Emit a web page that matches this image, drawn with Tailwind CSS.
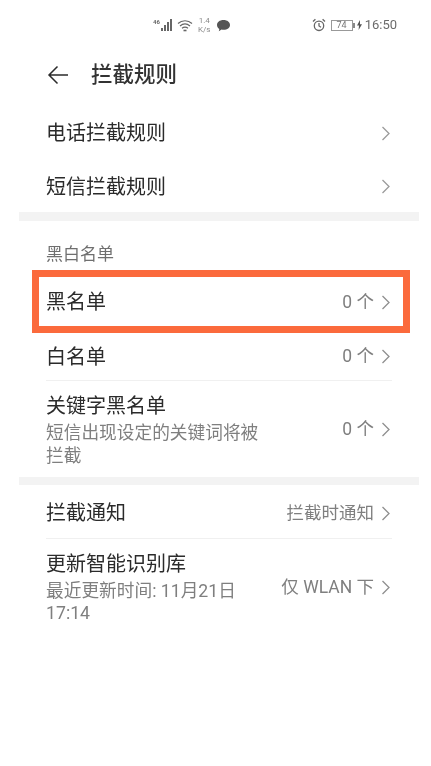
<!DOCTYPE html>
<html lang="zh">
<head>
<meta charset="utf-8">
<script src="https://cdn.jsdelivr.net/npm/@tailwindcss/browser@4"></script>
</head>
<body class="bg-white">
<div class="w-[431px] h-[766px] overflow-hidden bg-white text-[#2b2b2b] font-['Roboto','Noto_Sans_CJK_SC',sans-serif] blur-[0.4px]">
  <!-- status bar -->
  <div class="h-[50px] pl-[153px] pr-[34px] flex items-center justify-between text-[#6b6b6b]">
    <div class="flex items-center gap-[3px]">
      <svg width="21" height="14" viewBox="0 0 21 14" fill="#666"><text x="0" y="6" font-size="6" font-weight="700" font-family="Roboto">46</text><rect x="8" y="10" width="2" height="3"/><rect x="11" y="7" width="2" height="6"/><rect x="14" y="4" width="2" height="9"/><rect x="17" y="1" width="2" height="12"/></svg>
      <svg width="16" height="13" viewBox="0 0 16 13" fill="none" stroke="#666" stroke-width="1.2"><path d="M1 4.5C5 .8 11 .8 15 4.5M3 7C6 4.4 10 4.4 13 7M5 9.3C6.8 8 9.2 8 11 9.3"/><path d="M6.5 11.5h3" stroke-width="1.6"/></svg>
      <div class="flex flex-col items-center text-[8px] leading-[9px] ml-[2px] text-[#8a8a8a]"><span>1.4</span><span>K/s</span></div>
      <svg class="ml-[3px]" width="15" height="13" viewBox="0 0 15 13" fill="#555"><path d="M7.5 1C3.6 1 1 3.2 1 6c0 1.6.9 3 2.3 3.9L2.8 12.2 5.6 10.6c.6.1 1.2.2 1.9.2 3.9 0 6.5-2.1 6.5-4.8S11.4 1 7.5 1z"/></svg>
    </div>
    <div class="flex items-center">
      <svg width="14" height="14" viewBox="0 0 14 14" fill="none" stroke="#666" stroke-width="1.3"><circle cx="7" cy="7.8" r="4.7"/><path d="M7 5v3l2 1.2M1 3.4 3.4 1.2M13 3.4 10.6 1.2"/></svg>
      <div class="ml-[5px] w-[22px] h-[11px] border border-[#999] text-[9px] leading-[9px] text-center text-[#777]">74</div>
      <div class="w-[2px] h-[5px] bg-[#888]"></div>
      <svg class="ml-[2px]" width="5" height="10" viewBox="0 0 5 10" fill="#555"><path d="M3 0 0 5.6h2L1.6 10 5 4.2H3z"/></svg>
      <span class="ml-[3px] text-[13px] leading-[16px]">16:50</span>
    </div>
  </div>
  <!-- header -->
  <div class="h-[50px] pl-[47px] flex items-center">
    <svg width="22" height="20" viewBox="0 0 22 20" fill="none" stroke="#2b2b2b" stroke-width="1.5"><path d="M21 10H2M10.5 1.5 2 10l8.5 8.5"/></svg>
    <span class="ml-[22px] text-[21.5px] leading-[30px] font-medium text-[#333]">拦截规则</span>
  </div>
  <div class="ml-[19px] w-[400px]">
    <div class="px-[27px]">
      <div class="h-[54px] mt-[6px] flex items-center justify-between">
        <span class="text-[20px] leading-[28px]">电话拦截规则</span>
        <svg class="mr-[1px]" width="10" height="15" viewBox="0 0 10 15" fill="none" stroke="#9b9b9b" stroke-width="1.3"><path d="M1.5 1 8 7.5 1.5 14"/></svg>
      </div>
      <div class="h-[52px] pt-[1px] flex items-center justify-between">
        <span class="text-[20px] leading-[28px]">短信拦截规则</span>
        <svg class="mr-[1px]" width="10" height="15" viewBox="0 0 10 15" fill="none" stroke="#9b9b9b" stroke-width="1.3"><path d="M1.5 1 8 7.5 1.5 14"/></svg>
      </div>
    </div>
    <div class="h-[9px] bg-[#f3f3f3]"></div>
    <div class="h-[49px] px-[27px] flex items-end">
      <span class="text-[17px] leading-[24px] pb-[4px] text-[#6f6f6f]">黑白名单</span>
    </div>
    <div class="px-[27px] relative">
      <div class="absolute left-[13px] w-[378px] top-0 h-[63px] border-[7px] border-[#fb6a3c]"></div>
      <div class="h-[63px] pt-[1px] flex items-center justify-between">
        <span class="text-[20px] leading-[28px]">黑名单</span>
        <div class="flex items-center text-[#7f7f7f] text-[17.5px]"><span>0 个</span><svg class="ml-[7px] mr-[1px]" width="10" height="15" viewBox="0 0 10 15" fill="none" stroke="#8f8f8f" stroke-width="1.3"><path d="M1.5 1 8 7.5 1.5 14"/></svg></div>
      </div>
      <div class="h-[48px] flex items-center justify-between border-b border-[#f0f0f0]">
        <span class="text-[20px] leading-[28px]">白名单</span>
        <div class="flex items-center text-[#7f7f7f] text-[17.5px]"><span>0 个</span><svg class="ml-[7px] mr-[1px]" width="10" height="15" viewBox="0 0 10 15" fill="none" stroke="#8f8f8f" stroke-width="1.3"><path d="M1.5 1 8 7.5 1.5 14"/></svg></div>
      </div>
      <div class="h-[96px] flex items-center justify-between">
        <div class="w-[216px] pt-[2px]">
          <div class="text-[20px] leading-[26px]">关键字黑名单</div>
          <div class="text-[17.7px] leading-[23px] text-[#7f7f7f] mt-[3px]">短信出现设定的关键词将被拦截</div>
        </div>
        <div class="flex items-center text-[#7f7f7f] text-[17.5px]"><span>0 个</span><svg class="ml-[7px] mr-[1px]" width="10" height="15" viewBox="0 0 10 15" fill="none" stroke="#8f8f8f" stroke-width="1.3"><path d="M1.5 1 8 7.5 1.5 14"/></svg></div>
      </div>
    </div>
    <div class="h-[8px] bg-[#f3f3f3]"></div>
    <div class="px-[27px]">
      <div class="h-[54px] pt-[3px] flex items-center justify-between border-b border-[#f0f0f0]">
        <span class="text-[20px] leading-[28px]">拦截通知</span>
        <div class="flex items-center text-[#7f7f7f] text-[17.5px]"><span>拦截时通知</span><svg class="ml-[7px] mr-[1px]" width="10" height="15" viewBox="0 0 10 15" fill="none" stroke="#8f8f8f" stroke-width="1.3"><path d="M1.5 1 8 7.5 1.5 14"/></svg></div>
      </div>
      <div class="h-[96px] flex items-center justify-between">
        <div class="w-[216px]">
          <div class="text-[20px] leading-[26px]">更新智能识别库</div>
          <div class="text-[17.7px] leading-[22px] text-[#7f7f7f] mt-[3px]">最近更新时间: 11月21日 17:14</div>
        </div>
        <div class="flex items-center text-[#7f7f7f] text-[17.5px]"><span>仅 WLAN 下</span><svg class="ml-[7px] mr-[1px]" width="10" height="15" viewBox="0 0 10 15" fill="none" stroke="#8f8f8f" stroke-width="1.3"><path d="M1.5 1 8 7.5 1.5 14"/></svg></div>
      </div>
    </div>
  </div>
</div>
</body>
</html>
